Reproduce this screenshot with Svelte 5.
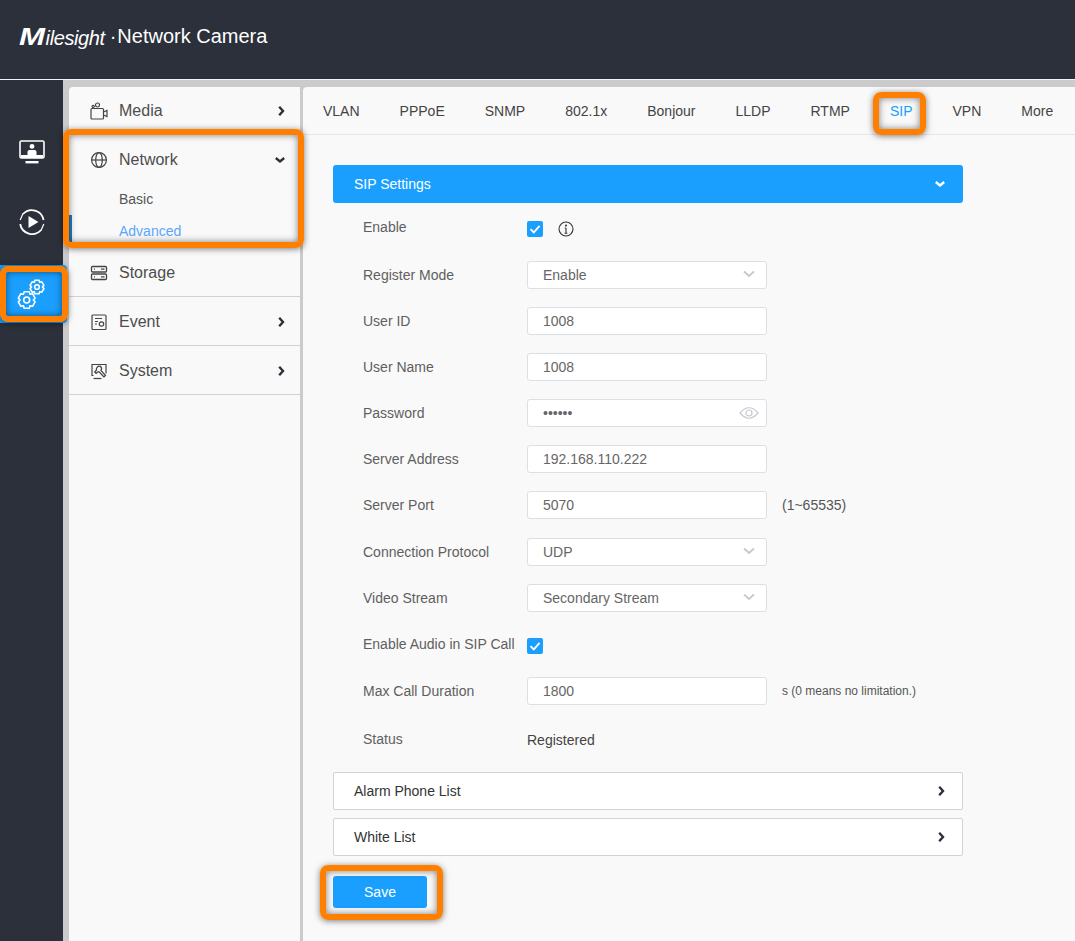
<script>
  const tabs = ['VLAN', 'PPPoE', 'SNMP', '802.1x', 'Bonjour', 'LLDP', 'RTMP', 'SIP', 'VPN', 'More']

  const rows = [
    { label: 'Register Mode', kind: 'select', value: 'Enable' },
    { label: 'User ID', kind: 'input', value: '1008' },
    { label: 'User Name', kind: 'input', value: '1008' },
    { label: 'Password', kind: 'password', value: '••••••' },
    { label: 'Server Address', kind: 'input', value: '192.168.110.222' },
    { label: 'Server Port', kind: 'input', value: '5070', hint: '(1~65535)', wide: true },
    { label: 'Connection Protocol', kind: 'select', value: 'UDP' },
    { label: 'Video Stream', kind: 'select', value: 'Secondary Stream' }
  ]

  // six-toothed gear outline for the settings icon
  function gear(cx, cy, r, R) {
    const pts = []
    for (let i = 0; i < 6; i++) {
      const a = (i * Math.PI) / 3 - Math.PI / 2
      const w = 0.3
      const at = (rad, ang) => `${(cx + rad * Math.cos(ang)).toFixed(2)} ${(cy + rad * Math.sin(ang)).toFixed(2)}`
      pts.push(at(r, a - 0.52), at(R, a - w), at(R, a + w), at(r, a + 0.52))
    }
    return 'M' + pts.join('L') + 'Z'
  }
</script>

{#snippet right()}
  <svg class="chev" width="10" height="12" viewBox="0 0 10 12"><path d="M3.2 1.8 7 6 3.2 10.2" /></svg>
{/snippet}

{#snippet down()}
  <svg class="chev" width="12" height="10" viewBox="0 0 12 10"><path d="M1.8 3 6 6.4 10.2 3" /></svg>
{/snippet}

{#snippet check()}
  <svg width="16" height="16" viewBox="0 0 16 16"><path d="M3.5 8.2 6.8 11.4 12.6 4.8" /></svg>
{/snippet}

<div class="page">
  <header>
    <span class="logo"><span class="logo-m">M</span>ilesight</span>
    <span class="dot">·</span>
    <span class="product">Network Camera</span>
  </header>

  <div class="main">
    <nav class="rail">
      <div class="rail-item first">
        <svg width="28" height="26" viewBox="0 0 28 26">
          <rect x="2" y="2" width="24" height="17" rx="1.5" fill="none" stroke="#fff" stroke-width="1.6" />
          <circle cx="14" cy="7.4" r="2.4" fill="#fff" />
          <path d="M9.5 16v-3q0-2 2-2h5q2 0 2 2v3z" fill="#fff" />
          <rect x="3" y="16" width="22" height="3" fill="#fff" />
          <rect x="7.5" y="22" width="13" height="2.4" fill="#fff" />
        </svg>
      </div>
      <div class="rail-item second">
        <svg width="28" height="28" viewBox="0 0 28 28" fill="none" stroke="#fff" stroke-width="1.8">
          <path d="M25.6 12A12 12 0 0 0 5 6" />
          <path d="M2.2 16A12 12 0 0 0 23 22" />
          <path d="M2.2 12 5 5.5M25.8 16 23 22.5" stroke-width="1.2" />
          <path d="M10.5 8 20.5 14 10.5 20z" fill="#fff" stroke="none" />
        </svg>
      </div>
      <div class="rail-item active">
        <svg width="67" height="58" viewBox="0 0 67 58" fill="none" stroke="#fff" stroke-width="1.6" stroke-linejoin="round">
          <path d={gear(26.7, 35, 6.6, 8.6)} />
          <circle cx="26.7" cy="35" r="3" />
          <path d={gear(37, 22, 5.4, 7.1)} />
          <circle cx="37" cy="22" r="2.3" />
        </svg>
      </div>
    </nav>

    <aside class="menu">
      <div class="item top">
        <svg class="icon" width="18" height="18" viewBox="0 0 18 18" fill="none" stroke="#444" stroke-width="1.2">
          <rect x="1" y="6.5" width="12.5" height="10.5" rx="1" />
          <path d="M13.5 10l3.5-1.5v6L13.5 13" />
          <circle cx="7.5" cy="3" r="2" />
          <circle cx="3.2" cy="4.4" r="1.1" />
        </svg>
        <span>Media</span>
        {@render right()}
      </div>

      <div class="group">
        <div class="item plain">
          <svg class="icon" width="18" height="18" viewBox="0 0 18 18" fill="none" stroke="#444" stroke-width="1.2">
            <circle cx="9" cy="9" r="7.4" />
            <ellipse cx="9" cy="9" rx="3.3" ry="7.4" />
            <path d="M1.6 9h14.8" />
          </svg>
          <span>Network</span>
          {@render down()}
        </div>
        <div class="sub">Basic</div>
        <div class="sub current">Advanced</div>
      </div>

      <div class="item">
        <svg class="icon" width="18" height="18" viewBox="0 0 18 18" fill="none" stroke="#444" stroke-width="1.3">
          <rect x="1.5" y="2.5" width="15" height="5.5" rx="1" />
          <rect x="1.5" y="10" width="15" height="5.5" rx="1" />
          <path d="M11 5.2h3.5M11 12.8h3.5M4 5.2h1M4 12.8h1" />
        </svg>
        <span>Storage</span>
      </div>

      <div class="item">
        <svg class="icon" width="18" height="18" viewBox="0 0 18 18" fill="none" stroke="#444" stroke-width="1.2">
          <rect x="2" y="2" width="14" height="14.5" rx="1" />
          <path d="M5 5.5h7M5 8.5h3M5 11h2" />
          <circle cx="11.5" cy="11" r="2.2" />
        </svg>
        <span>Event</span>
        {@render right()}
      </div>

      <div class="item">
        <svg class="icon" width="18" height="18" viewBox="0 0 18 18" fill="none" stroke="#444" stroke-width="1.2">
          <path d="M3.5 13.5H2V2.5h14v9" />
          <path d="M10.5 4.4a3 3 0 0 0-4 3.6l-1.8 2 1.4 1.4 2-1.8 1.2.4 4.6 5 1.6-1.5-4.6-5a3 3 0 0 0-.4-4z" />
          <path d="M3.5 16.5h8" />
        </svg>
        <span>System</span>
        {@render right()}
      </div>
    </aside>

    <main class="content">
      <div class="tabs">
        {#each tabs as tab}
          <span class="tab" class:on={tab === 'SIP'}>{tab}</span>
        {/each}
      </div>

      <section class="panel">
        <div class="bar blue">
          <span>SIP Settings</span>
          {@render down()}
        </div>

        <div class="form">
          <div class="row first-row">
            <label for="enable">Enable</label>
            <span class="check">{@render check()}</span>
            <svg class="info" width="16" height="16" viewBox="0 0 16 16" fill="none" stroke="#333" stroke-width="1.1">
              <circle cx="8" cy="8" r="7" />
              <path d="M8 7v5M6.6 12.2h2.8M6.8 7h1.2" />
              <circle cx="8" cy="4.6" r=".5" fill="#333" />
            </svg>
          </div>

          {#each rows as row}
            <div class="row" class:wide={row.wide}>
              <label for={row.label}>{row.label}</label>
              <div class="field" id={row.label}>
                <span>{row.value}</span>
                {#if row.kind === 'select'}
                  <svg class="caret" width="12" height="8" viewBox="0 0 12 8"><path d="M1 1.5 6 6l5-4.5" /></svg>
                {:else if row.kind === 'password'}
                  <svg class="eye" width="20" height="14" viewBox="0 0 20 14" fill="none" stroke="#c6c9cf" stroke-width="1.2">
                    <path d="M1 7q9-10.5 18 0q-9 10.5-18 0z" />
                    <circle cx="10" cy="7" r="3" />
                  </svg>
                {/if}
              </div>
              {#if row.hint}<span class="hint">{row.hint}</span>{/if}
            </div>
          {/each}

          <div class="row wide">
            <label for="audio">Enable Audio in SIP Call</label>
            <span class="check low">{@render check()}</span>
          </div>

          <div class="row wider">
            <label for="duration">Max Call Duration</label>
            <div class="field" id="duration"><span>1800</span></div>
            <span class="hint small">s (0 means no limitation.)</span>
          </div>

          <div class="row">
            <label for="status">Status</label>
            <span class="status" id="status">Registered</span>
          </div>
        </div>

        <div class="bar">
          <span>Alarm Phone List</span>
          {@render right()}
        </div>
        <div class="bar">
          <span>White List</span>
          {@render right()}
        </div>

        <button>Save</button>
      </section>
    </main>
  </div>

  <!-- orange callouts drawn over the screenshot -->
  <div class="mark m-network"></div>
  <div class="mark m-sip"></div>
  <div class="mark m-gear"></div>
  <div class="mark m-save"></div>
</div>

<style>
  :global(body) {
    background: #f9f9f9;
  }
  .page {
    position: relative;
    height: 941px;
    overflow: hidden;
    font-family: 'Liberation Sans', Arial, sans-serif;
    font-size: 14px;
    color: #444;
  }
  header {
    height: 73px;
    padding: 0 0 6px 19px;
    border-bottom: 1px solid #f2f2f2;
    background: #2b303b;
    color: #fff;
    display: flex;
    align-items: center;
  }
  .logo {
    font-style: italic;
    font-size: 20px;
    letter-spacing: -0.4px;
  }
  .logo-m {
    display: inline-block;
    font-size: 24px;
    font-weight: bold;
    transform: scaleX(1.3);
    transform-origin: left;
    margin-right: 7px;
  }
  .dot {
    font-size: 20px;
    margin: 0 1px 0 5px;
  }
  .product {
    font-size: 20px;
  }
  .main {
    display: flex;
    height: 861px;
    background: #cbcbcb;
  }
  .rail {
    width: 63px;
    flex: none;
    background: #2b303b;
    display: flex;
    flex-direction: column;
  }
  .rail-item {
    height: 72px;
    display: flex;
    align-items: center;
    justify-content: center;
  }
  .rail-item.first {
    margin-top: 36px;
  }
  .rail-item.second {
    height: 68px;
  }
  .rail-item.active {
    width: 67px;
    height: 58px;
    margin-top: 9px;
    background: #1a9fff;
    border-radius: 0 4px 4px 0;
    position: relative;
    z-index: 1;
  }
  .menu {
    width: 231px;
    flex: none;
    margin: 7px 0 0 6px;
    background: #f9f9f9;
    border-radius: 4px 0 0 0;
  }
  .item {
    height: 47px;
    padding: 1px 14px 0 21px;
    display: flex;
    align-items: center;
    font-size: 16px;
    border-bottom: 1px solid #d2d2d2;
    color: #4d4d4d;
  }
  .item.top {
    padding-top: 0;
  }
  .item.plain {
    height: 46px;
    padding-top: 2px;
    border: 0;
  }
  .icon {
    flex: none;
    margin-right: 11px;
  }
  .item > span {
    flex: 1;
  }
  .chev {
    flex: none;
    fill: none;
    stroke: #2b303b;
    stroke-width: 2.4;
  }
  .group {
    height: 113px;
  }
  .sub {
    height: 32px;
    line-height: 32px;
    padding-left: 50px;
    color: #555;
  }
  .sub.current {
    color: #5aa6ff;
    box-shadow: inset 3px 0 0 #1a7fc9;
  }
  .content {
    flex: 1;
    margin: 7px 0 0 3px;
    background: #f9f9f9;
    border-radius: 4px 0 0 0;
  }
  .tabs {
    height: 47px;
    display: flex;
    align-items: center;
    gap: 40px;
    padding-left: 20px;
    border-bottom: 1px solid #e6e6e6;
    white-space: nowrap;
  }
  .tab.on {
    color: #1a9fff;
  }
  .panel {
    width: 630px;
    margin: 30px 0 0 30px;
  }
  .bar {
    height: 38px;
    box-sizing: border-box;
    display: flex;
    align-items: center;
    justify-content: space-between;
    padding: 0 16px 0 20px;
    margin-bottom: 8px;
    background: #fff;
    border: 1px solid #d2d2d2;
    border-radius: 2px;
    color: #333;
  }
  .bar.blue {
    background: #1a9fff;
    border: 0;
    border-radius: 3px;
    padding: 0 17px 0 21px;
    color: #fff;
    margin: 0;
  }
  .bar.blue .chev {
    stroke: #fff;
  }
  .form {
    padding: 12px 0 19px 30px;
  }
  .row {
    height: 28px;
    margin-bottom: 18px;
    display: flex;
    align-items: center;
  }
  .row:last-child {
    margin-bottom: 0;
  }
  .row.wide {
    margin-bottom: 19px;
  }
  .row.wider {
    margin-bottom: 20px;
  }
  label {
    width: 164px;
    flex: none;
    color: #5f5f5f;
  }
  .first-row label {
    margin-top: -4px;
  }
  .check {
    width: 16px;
    height: 16px;
    border-radius: 2px;
    background: #1a9fff;
    display: block;
  }
  .check.low {
    margin-top: 4px;
  }
  .check svg {
    display: block;
    fill: none;
    stroke: #fff;
    stroke-width: 1.8;
  }
  .info {
    margin-left: 15px;
  }
  .field {
    width: 240px;
    height: 28px;
    box-sizing: border-box;
    display: flex;
    align-items: center;
    justify-content: space-between;
    padding: 0 7px 0 15px;
    background: #fff;
    border: 1px solid #dcdfe6;
    border-radius: 3px;
    color: #666;
  }
  .caret {
    fill: none;
    stroke: #c6c9cf;
    stroke-width: 2;
    margin: -3px 4px 0 0;
  }
  .hint {
    margin-left: 15px;
    color: #555;
  }
  .hint.small {
    font-size: 12px;
  }
  .status {
    color: #444;
    margin-top: 2px;
  }
  button {
    display: block;
    width: 94px;
    height: 32px;
    margin-top: 20px;
    border: 0;
    border-radius: 3px;
    background: #1a9fff;
    color: #fff;
    font: inherit;
  }
  .mark {
    position: absolute;
    box-sizing: border-box;
    border: 6px solid #ff8000;
    border-radius: 8px;
    box-shadow: 0 1px 6px rgba(0, 0, 0, 0.5), inset 0 0 7px rgba(0, 0, 0, 0.5);
    z-index: 2;
  }
  .m-network {
    left: 63px;
    top: 129px;
    width: 241px;
    height: 119px;
  }
  .m-sip {
    left: 873px;
    top: 92px;
    width: 53px;
    height: 43px;
  }
  .m-gear {
    left: 0;
    top: 266px;
    width: 68px;
    height: 56px;
  }
  .m-save {
    left: 320px;
    top: 865px;
    width: 123px;
    height: 55px;
  }
</style>
